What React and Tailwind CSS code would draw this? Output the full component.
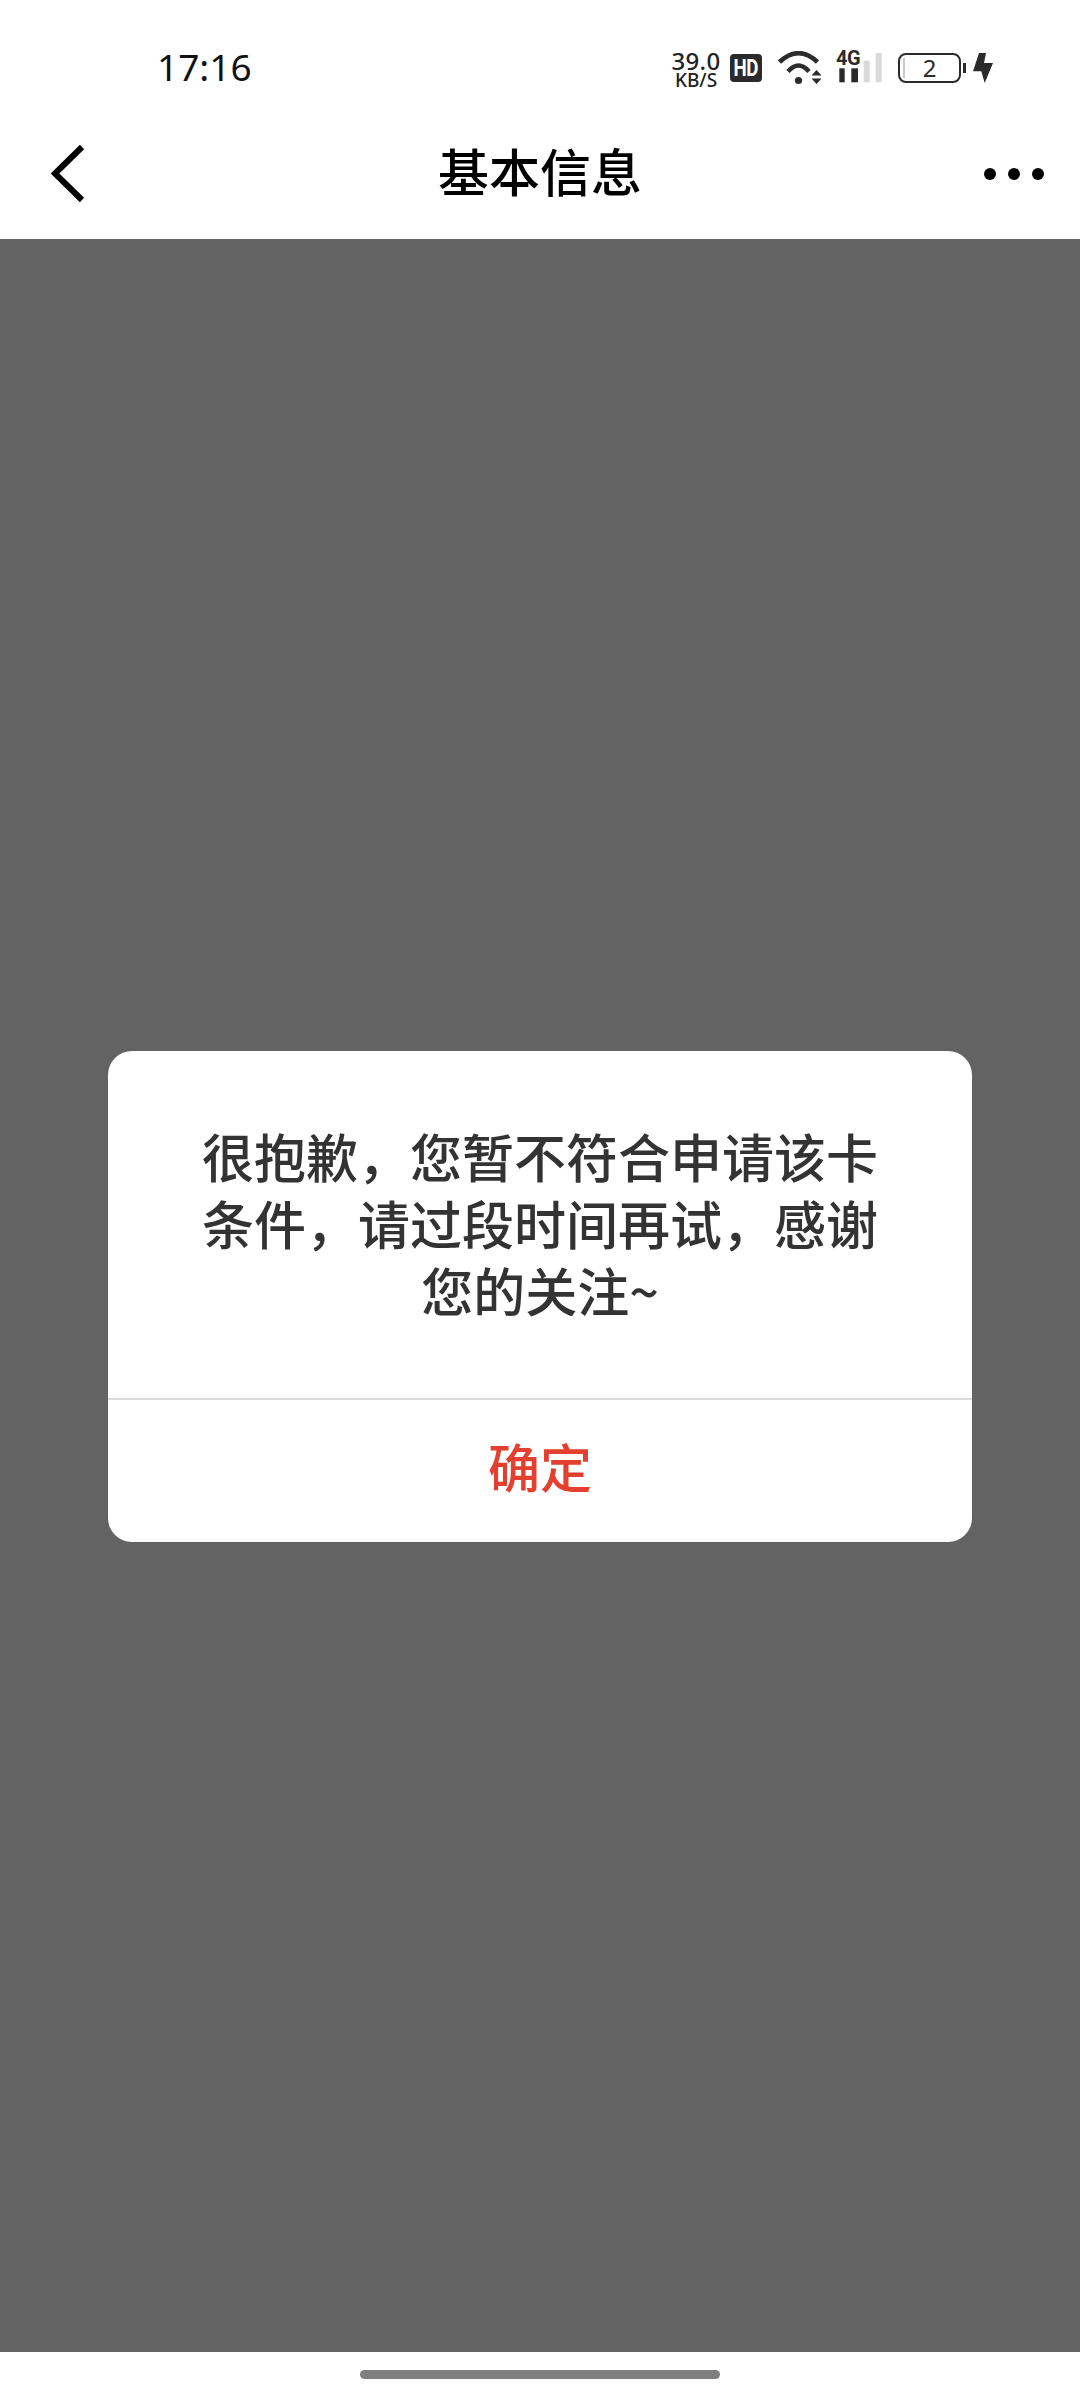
import React from "react";

const cjk = "font-['Noto_Sans_CJK_SC','Noto_Sans',sans-serif]";

const StatusIcons = () => (
  <div className="flex items-center">
    {/* network speed */}
    <div className="flex flex-col items-center w-[48px] mt-[2px] font-['Noto_Sans',sans-serif] text-[#222]">
      <span className="text-[24px] leading-[21px] font-medium tracking-[0.3px]">39.0</span>
      <span className="text-[19px] leading-[18px] font-medium">KB/S</span>
    </div>
    <span className="ml-[10px] w-[32px] h-[28px] rounded-[4px] bg-[#2b2b2b] text-white flex items-center justify-center font-['Roboto',sans-serif] font-bold text-[24px] leading-none">
      <span className="scale-x-[0.78] tracking-[-0.5px]">HD</span>
    </span>
    {/* wifi */}
    <svg className="ml-[16px]" width="44" height="34" viewBox="0 0 44 34" fill="none">
      <path d="M1.5 11Q20.5 -6.6 39.5 11" stroke="#2b2b2b" strokeWidth="4.6" />
      <path d="M10 20.5Q20.5 8.5 31 20.5" stroke="#2b2b2b" strokeWidth="4.6" />
      <circle cx="20.5" cy="29.5" r="3.6" fill="#2b2b2b" />
      <path d="M33.5 24.5L38.5 19L43.5 24.5ZM33.5 27.5L38.5 33L43.5 27.5Z" fill="#2b2b2b" />
    </svg>
    {/* cellular */}
    <div className="ml-[14px] relative w-[47px] h-[32px]">
      <span className="absolute left-0 top-[-4px] font-['Roboto',sans-serif] font-bold text-[20px] leading-[20px] tracking-[-0.5px] text-[#2b2b2b]">4G</span>
      <svg className="absolute left-0 top-0" width="47" height="32" viewBox="0 0 47 32">
        <rect x="3.3" y="16.3" width="5.4" height="14" fill="#2b2b2b" />
        <rect x="15.3" y="16.3" width="6.7" height="14" fill="#2b2b2b" />
        <rect x="27.7" y="8.7" width="6" height="21.6" fill="#d9d9d9" />
        <rect x="39.7" y="1" width="6" height="29.3" fill="#d9d9d9" />
      </svg>
    </div>
    {/* battery */}
    <div className="ml-[15px] relative w-[63px] h-[30px] rounded-[8px] border-[2.5px] border-[#2b2b2b] flex items-center justify-center font-['Noto_Sans',sans-serif] text-[24px] leading-none text-[#2b2b2b]">
      <span className="absolute left-[3px] top-[3px] bottom-[3px] w-[2px] bg-[#c8c8c8]" />
      2
    </div>
    <div className="ml-[2px] w-[3px] h-[10px] bg-[#2b2b2b]" />
    <svg className="ml-[7px]" width="20" height="30" viewBox="0 0 20 30">
      <path d="M6 0L0 18.3H8.3L11.7 30L20 10H11L13 0Z" fill="#2b2b2b" />
    </svg>
  </div>
);

const App = () => {
  return (
    <div className={`w-[1080px] h-[2400px] flex flex-col bg-white ${cjk}`}>
      {/* status bar */}
      <div className="h-[108px] pt-[28px] pl-[157px] pr-[87px] flex items-center justify-between">
        <span className="font-['Noto_Sans',sans-serif] text-[37px] leading-none text-[#111] mb-[4px]">17:16</span>
        <StatusIcons />
      </div>

      {/* nav bar */}
      <div className="h-[131px] px-[36px] flex items-center justify-between">
        <div className="w-[60px] pl-[13px]">
          <svg width="40" height="60" viewBox="0 0 40 60" fill="none">
            <path d="M33 3L6 29.5L33 56" stroke="#000" strokeWidth="6" />
          </svg>
        </div>
        <h1 className="text-[51px] leading-none font-medium text-black mb-[6px]">基本信息</h1>
        <div className="flex items-center gap-[12px] w-[60px]">
          <span className="w-[12px] h-[12px] rounded-full bg-black" />
          <span className="w-[12px] h-[12px] rounded-full bg-black" />
          <span className="w-[12px] h-[12px] rounded-full bg-black" />
        </div>
      </div>

      {/* dimmed content with dialog */}
      <div className="flex-1 bg-[#636363] flex items-center justify-center">
        <div className="w-[864px] h-[491px] mt-[1px] bg-white rounded-[24px] flex flex-col overflow-hidden">
          <div className="h-[347px] px-[80px] pt-[71px] text-center text-[52px] leading-[67px] font-medium text-[#333]">
            很抱歉，您暂不符合申请该卡条件，请过段时间再试，感谢您的关注~
          </div>
          <div className="flex-1 border-t-2 border-[#dcdcdc] pb-[9px] flex items-center justify-center text-[52px] leading-none font-medium text-[#e3402f]">
            确定
          </div>
        </div>
      </div>

      {/* home indicator */}
      <div className="h-[48px] pb-[3px] flex items-center justify-center">
        <div className="w-[360px] h-[9px] rounded-full bg-[#7f7f7f]" />
      </div>
    </div>
  );
};

export default App;
